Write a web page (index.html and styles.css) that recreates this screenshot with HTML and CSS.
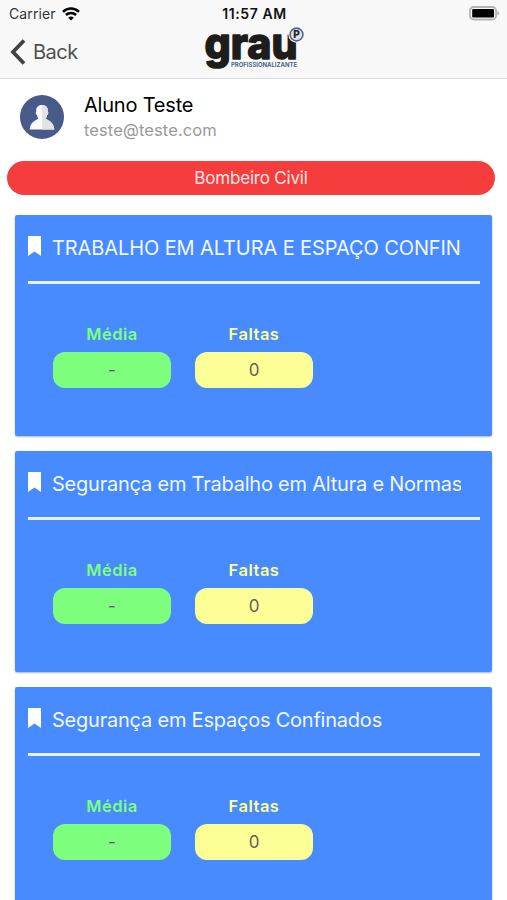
FILE: index.html
```html
<!DOCTYPE html>
<html lang="pt-BR">
<head>
    <meta charset="UTF-8">
    <meta name="viewport" content="width=device-width, initial-scale=1.0">
    <title>Grau Profissionalizante</title>
    <link rel="stylesheet" href="styles.css">
</head>
<body>
    <header class="header">
        <div class="status-bar">
            <div class="carrier">
                <span>Carrier</span>
                <svg class="wifi" viewBox="0 0 18 14" fill="none" stroke="#000" stroke-width="2.5">
                    <path d="M1 4.8C5.5.5 12.5.5 17 4.8"/>
                    <path d="M3.9 8C6.8 5.3 11.2 5.3 14.1 8"/>
                    <path d="M6.2 10.7C7.6 9.2 10.4 9.2 11.8 10.7L9 13.6Z" fill="#000" stroke="none"/>
                </svg>
            </div>
            <div class="time">11:57 AM</div>
            <svg class="battery" viewBox="0 0 32 15">
                <rect x="2" y="1" width="26" height="12.5" rx="3.5" fill="#f8f8f8" stroke="#b4b4b4" stroke-width="1.8"/>
                <rect x="4.2" y="3" width="21.8" height="8.6" rx="1" fill="#000"/>
                <path d="M29.3 4.8Q33 7.2 29.3 9.8Z" fill="#b4b4b4"/>
            </svg>
        </div>
        <div class="toolbar">
            <a class="back" href="#">
                <svg class="chevron" viewBox="0 0 16 26"><path d="M14 1.5L3 13L14 24.5" fill="none" stroke="#424242" stroke-width="3.8"/></svg>
                <span>Back</span>
            </a>
            <svg class="logo" viewBox="0 0 104 46">
                <text class="logo-name" x="1.5" y="31.5" textLength="93" lengthAdjust="spacingAndGlyphs">grau</text>
                <text class="logo-sub" x="28" y="40" textLength="66" lengthAdjust="spacingAndGlyphs">PROFISSIONALIZANTE</text>
                <circle cx="93.5" cy="7.5" r="8.2" fill="#f8f8f8"/>
                <circle cx="93.5" cy="7.5" r="6.4" fill="#dfe2ea" stroke="#575f8c" stroke-width="1.6"/>
                <text class="logo-badge" x="93.5" y="11" text-anchor="middle">P</text>
            </svg>
        </div>
    </header>

    <main class="content">
        <div class="profile">
            <svg class="avatar" viewBox="0 0 44 44">
                <circle cx="22" cy="22" r="22" fill="#485a88"/>
                <path d="M22 10C26 10 28.2 12.5 27.7 16.5C29 18 28 19.5 27 20C26.8 22 26 22.8 25.7 23.5C26 25 33.8 25.5 34.3 34.5H9.7C10.2 25.5 18 25 18.3 23.5C18 22.8 17.2 22 17 20C16 19.5 15 18 16.3 16.5C15.8 12.5 18 10 22 10Z" fill="#fafafa"/>
                <path d="M22 10C26 10 28.2 12.5 27.7 16.5C29 18 28 19.5 27 20C26.8 22 26 22.8 25.7 23.5C26 25 33.8 25.5 34.3 34.5H22Z" fill="#e3e3e4"/>
            </svg>
            <div>
                <div class="name">Aluno Teste</div>
                <div class="email">teste@teste.com</div>
            </div>
        </div>

        <div class="course">Bombeiro Civil</div>

        <div class="cards">
            <section class="card">
                <div class="card-title">
                    <svg class="bookmark" viewBox="0 0 13 20"><path d="M0 0H13V20L6.5 15.5L0 20Z" fill="#fff"/></svg>
                    <h2 class="upper">TRABALHO EM ALTURA E ESPAÇO CONFIN</h2>
                </div>
                <div class="grades">
                    <div class="grade media"><strong>Média</strong><span>-</span></div>
                    <div class="grade faltas"><strong>Faltas</strong><span>0</span></div>
                </div>
            </section>

            <section class="card">
                <div class="card-title">
                    <svg class="bookmark" viewBox="0 0 13 20"><path d="M0 0H13V20L6.5 15.5L0 20Z" fill="#fff"/></svg>
                    <h2>Segurança em Trabalho em Altura e Normas</h2>
                </div>
                <div class="grades">
                    <div class="grade media"><strong>Média</strong><span>-</span></div>
                    <div class="grade faltas"><strong>Faltas</strong><span>0</span></div>
                </div>
            </section>

            <section class="card">
                <div class="card-title">
                    <svg class="bookmark" viewBox="0 0 13 20"><path d="M0 0H13V20L6.5 15.5L0 20Z" fill="#fff"/></svg>
                    <h2>Segurança em Espaços Confinados</h2>
                </div>
                <div class="grades">
                    <div class="grade media"><strong>Média</strong><span>-</span></div>
                    <div class="grade faltas"><strong>Faltas</strong><span>0</span></div>
                </div>
            </section>
        </div>
    </main>
</body>
</html>
```

FILE: styles.css
```css
* {
    box-sizing: border-box;
}
body {
    margin: 0;
    height: 900px;
    overflow: hidden;
    background: #fff;
    font-family: Inter, "Liberation Sans", sans-serif;
}
svg {
    display: block;
    flex-shrink: 0;
}
.header {
    height: 79px;
    background: #f8f8f8;
    border-bottom: 1px solid #dadada;
}
.status-bar {
    display: grid;
    grid-template-columns: 1fr auto 1fr;
    align-items: center;
    height: 27px;
    padding: 0 7px 0 9px;
    font-size: 14px;
    color: #111;
}
.carrier {
    display: flex;
    align-items: center;
    gap: 6px;
    letter-spacing: 0.1px;
    color: #333;
}
.wifi {
    width: 18px;
    height: 14px;
}
.time {
    font-weight: 600;
    letter-spacing: 0.6px;
}
.battery {
    width: 32px;
    height: 15px;
    justify-self: end;
}
.toolbar {
    display: grid;
    grid-template-columns: 1fr 104px 1fr;
    height: 51px;
    padding-left: 2px;
}
.back {
    display: flex;
    align-items: center;
    gap: 7px;
    height: 49px;
    padding-left: 8px;
    font-size: 20px;
    letter-spacing: -0.5px;
    color: #515151;
    text-decoration: none;
}
.chevron {
    width: 16px;
    height: 26px;
}
.logo {
    width: 104px;
    height: 46px;
    overflow: visible;
}
.logo-name {
    font-size: 43px;
    font-weight: 800;
    fill: #1d1d1b;
    stroke: #1d1d1b;
    stroke-width: 1.4px;
    stroke-linejoin: round;
}
.logo-sub {
    font-size: 6.8px;
    font-weight: 700;
    fill: #4a6688;
}
.logo-badge {
    font-size: 10px;
    font-weight: 800;
    fill: #222;
}
.profile {
    display: flex;
    align-items: center;
    gap: 20px;
    height: 82px;
    padding: 0 20px 7px;
}
.avatar {
    width: 44px;
    height: 44px;
}
.name {
    font-size: 20px;
    line-height: 26px;
    letter-spacing: -0.2px;
    color: #000;
}
.email {
    font-size: 16.5px;
    line-height: 24px;
    letter-spacing: 0.1px;
    color: #999;
}
.course {
    height: 34px;
    margin: 0 12px 0 7px;
    border-radius: 17px;
    background: #f53d3d;
    color: #ffe5e5;
    font-size: 17px;
    line-height: 34px;
    letter-spacing: -0.2px;
    text-align: center;
}
.cards {
    display: flex;
    flex-direction: column;
    gap: 14.8px;
    padding: 20px 15px 0;
}
.card {
    height: 221px;
    flex-shrink: 0;
    padding: 0 12px 0 13px;
    border-radius: 2px;
    background: #488aff;
    box-shadow: 0 1px 2px rgba(0,0,0,0.3);
}
.card-title {
    display: flex;
    height: 69px;
    padding: 20px 19px 0 0;
    gap: 11px;
    border-bottom: 3px solid #e8f2ff;
}
.bookmark {
    width: 13px;
    height: 20px;
    margin-top: 1px;
}
.card-title h2 {
    flex: 1;
    margin: 0;
    overflow: hidden;
    white-space: nowrap;
    font-size: 20px;
    font-weight: 400;
    line-height: 26px;
    letter-spacing: -0.22px;
    color: #f0f7ff;
}
.card-title .upper {
    letter-spacing: -0.1px;
}
.grades {
    display: flex;
    gap: 24px;
    padding: 37px 0 0 25px;
}
.grade {
    width: 118px;
    text-align: center;
}
.grade strong {
    display: block;
    margin-bottom: 5.4px;
    font-size: 16.5px;
    font-weight: 600;
    line-height: 26px;
    letter-spacing: 0.5px;
}
.grade span {
    display: block;
    height: 36px;
    border-radius: 12px;
    font-size: 17px;
    line-height: 36px;
    color: #626262;
}
.media strong {
    color: #7dff7d;
}
.media span {
    background: #7dff7d;
}
.faltas strong {
    color: #fbff96;
}
.faltas span {
    background: #fbff96;
}
```
